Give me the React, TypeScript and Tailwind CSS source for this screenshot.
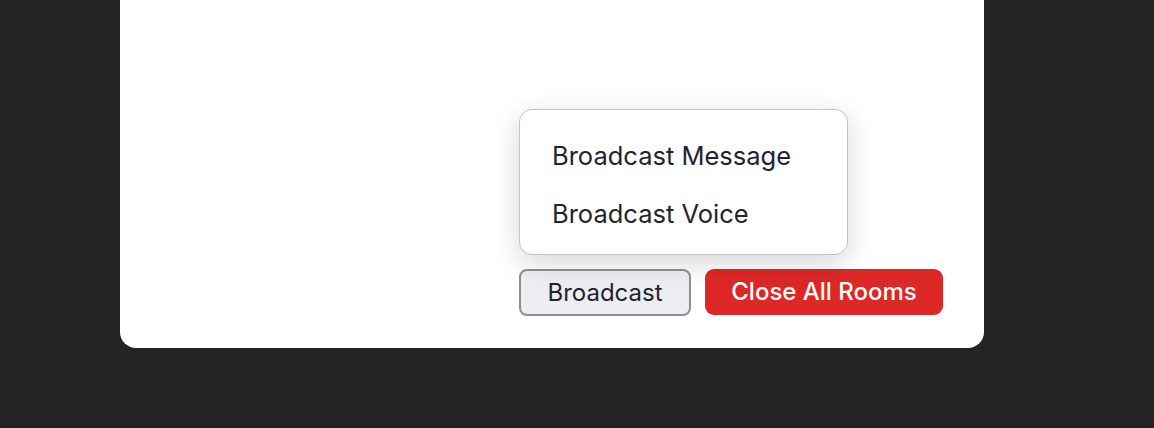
export default function App() {
  const items = ["Broadcast Message", "Broadcast Voice"];

  return (
    <div
      className="h-[428px] w-[1154px] bg-[#232323] flex"
      style={{ fontFamily: "Inter, 'Noto Sans', sans-serif" }}
    >
      <div className="ml-[120px] w-[864px] h-[348px] bg-white rounded-b-[16px] flex flex-col justify-end items-end pr-[41px] pb-[32px]">
        <div className="flex gap-[14px]">
          <div className="relative">
            <div className="absolute left-0 bottom-[61px] w-[329px] bg-white border border-[#c4c4c6] rounded-[13px] shadow-[0_8px_28px_rgba(0,0,0,0.16)] pt-[17px] pb-[11px]">
              {items.map((label) => (
                <div
                  key={label}
                  className="h-[58px] flex items-center pl-[32px] text-[25.5px] text-[#23232f]"
                >
                  {label}
                </div>
              ))}
            </div>
            <button className="h-[47px] w-[172px] rounded-[8px] border-2 border-[#8e8e93] bg-[#ededf2] text-[24px] text-[#23232f] flex items-center justify-center">
              Broadcast
            </button>
          </div>
          <button className="h-[46px] w-[238px] rounded-[9px] bg-[#de2727] text-[24px] font-medium text-white flex items-center justify-center">
            Close All Rooms
          </button>
        </div>
      </div>
    </div>
  );
}
